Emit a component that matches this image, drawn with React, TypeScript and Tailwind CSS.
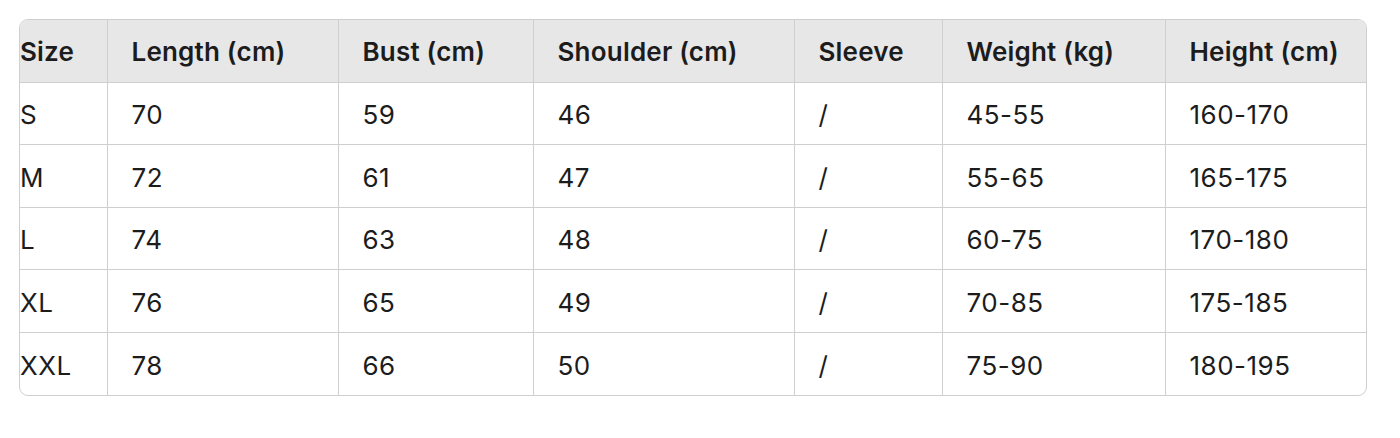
import React from "react";

const headers = ["Size", "Length (cm)", "Bust (cm)", "Shoulder (cm)", "Sleeve", "Weight (kg)", "Height (cm)"];
const widths = ["w-[87px]", "w-[231px]", "w-[195px]", "w-[261px]", "w-[148px]", "w-[223px]", "w-[203px]"];
const rows = [
  ["S", "70", "59", "46", "/", "45-55", "160-170"],
  ["M", "72", "61", "47", "/", "55-65", "165-175"],
  ["L", "74", "63", "48", "/", "60-75", "170-180"],
  ["XL", "76", "65", "49", "/", "70-85", "175-185"],
  ["XXL", "78", "66", "50", "/", "75-90", "180-195"],
];

export default function App() {
  return (
    <div className="w-[1400px] h-[438px] bg-white pt-[19px] pl-[19px]" style={{ fontFamily: "Inter, 'Noto Sans', sans-serif" }}>
      <div className="w-[1348px] border border-[#cfcfcf] rounded-[9px] overflow-hidden text-[#1c1c1c]">
        <table className="border-collapse table-fixed w-full">
          <thead>
            <tr className="bg-[#e7e7e7] h-[62px]">
              {headers.map((h, i) => (
                <th
                  key={h}
                  className={`${widths[i]} text-left font-semibold text-[26px] tracking-[0.2px] p-0 pt-[2px] ${i === 0 ? "pl-0" : "pl-[24px] border-l border-[#cfcfcf]"}`}
                >
                  {h}
                </th>
              ))}
            </tr>
          </thead>
          <tbody>
            {rows.map((r, ri) => (
              <tr key={ri} className="h-[62.5px] border-t border-[#cfcfcf]">
                {r.map((c, i) => (
                  <td
                    key={i}
                    className={`text-left font-normal text-[26px] tracking-[0.5px] p-0 pt-[3px] ${i === 0 ? "pl-0" : "pl-[24px] border-l border-[#cfcfcf]"}`}
                  >
                    {c}
                  </td>
                ))}
              </tr>
            ))}
          </tbody>
        </table>
      </div>
    </div>
  );
}
